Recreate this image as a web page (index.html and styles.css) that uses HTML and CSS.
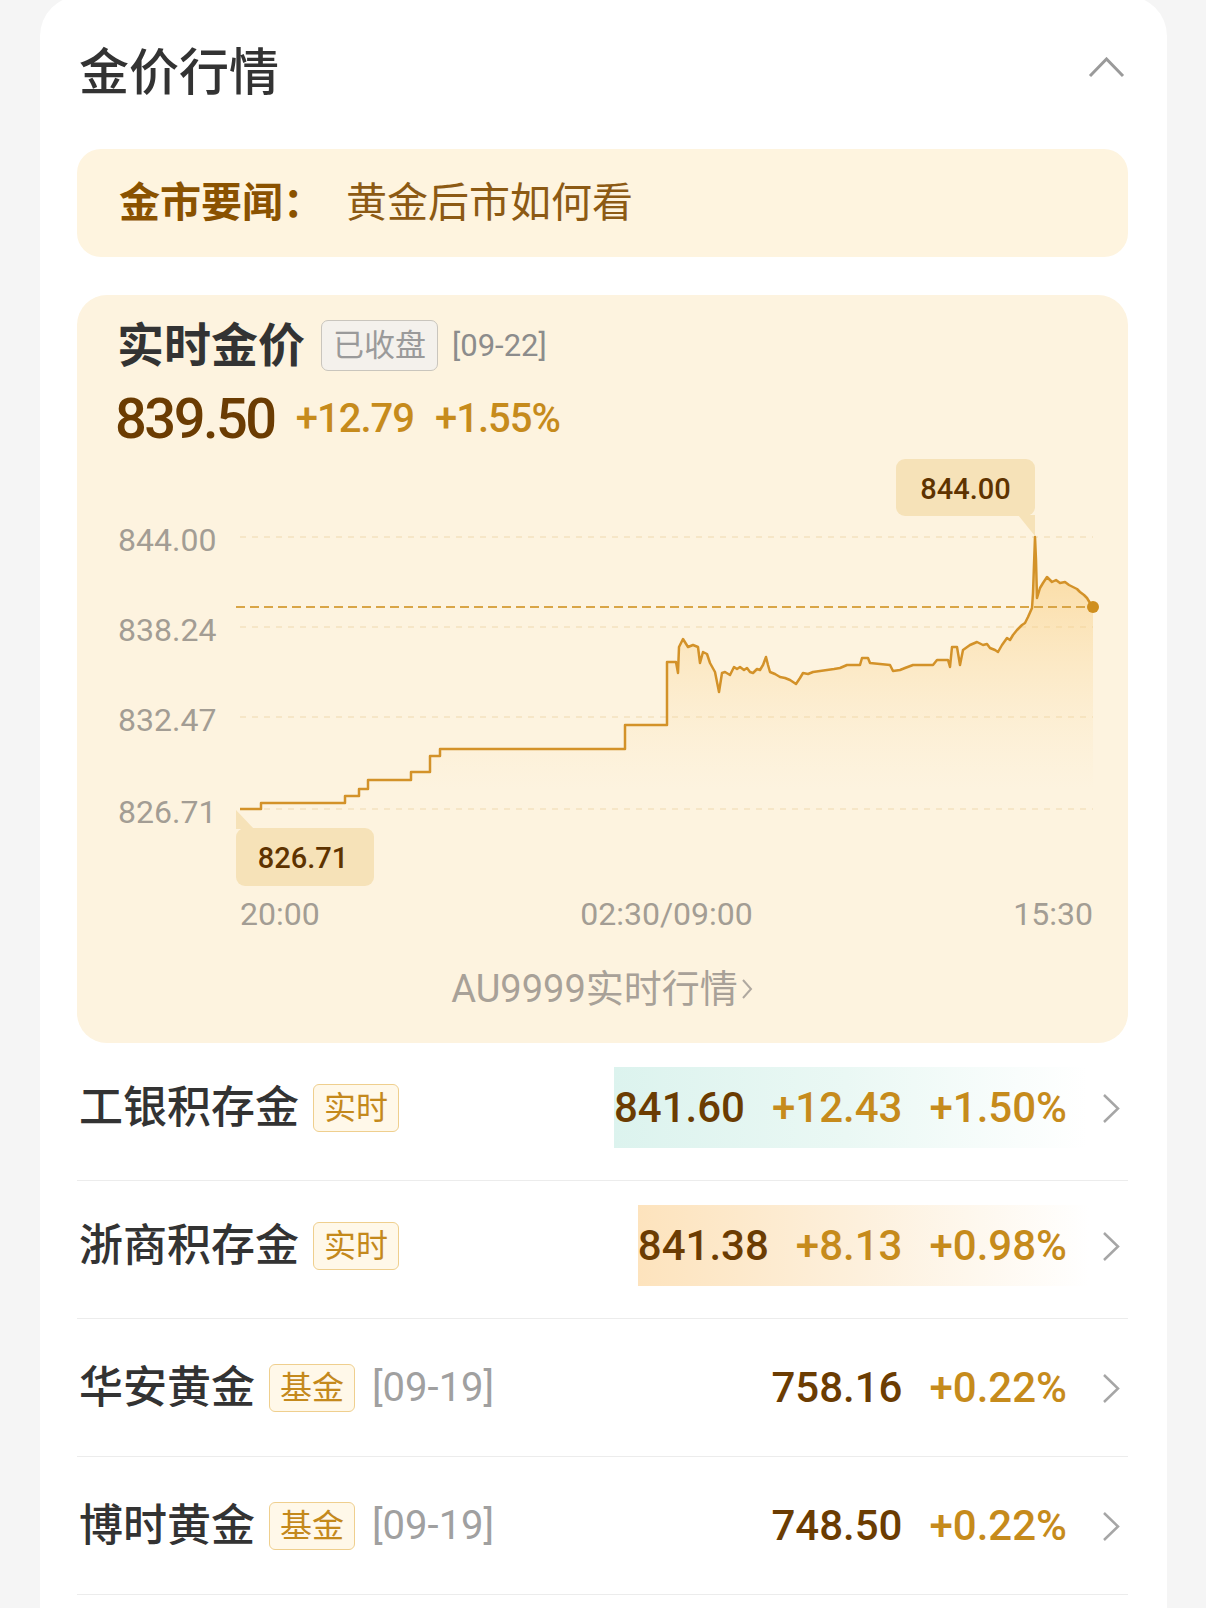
FILE: index.html
```html
<!DOCTYPE html>
<html lang="zh-CN">
<head>
<meta charset="utf-8">
<title>金价行情</title>
<link rel="stylesheet" href="styles.css">
</head>
<body>
<div class="card">
  <div class="head">
    <h1 class="title">金价行情</h1>
    <svg class="collapse" viewBox="0 0 37 22"><polyline points="2,19 18.5,2 35,19" /></svg>
  </div>

  <div class="news">
    <span class="news-label">金市要闻：</span><span class="news-text">黄金后市如何看</span>
  </div>

  <div class="live">
    <div class="live-head">
      <span class="live-title">实时金价</span>
      <span class="tag-closed">已收盘</span>
      <span class="live-date">[09-22]</span>
    </div>
    <div class="live-price">
      <span class="price">839.50</span>
      <span class="pchg">+12.79</span>
      <span class="pchg">+1.55%</span>
    </div>

    <svg class="chart" viewBox="77 457 1051 433" width="1051" height="433">
      <defs>
        <linearGradient id="areaGrad" gradientUnits="userSpaceOnUse" x1="0" y1="540" x2="0" y2="790">
          <stop offset="0" class="stop-a" />
          <stop offset="1" class="stop-b" />
        </linearGradient>
      </defs>
      <text class="ylab" x="118" y="551">844.00</text>
      <text class="ylab" x="118" y="641">838.24</text>
      <text class="ylab" x="118" y="731">832.47</text>
      <text class="ylab" x="118" y="823">826.71</text>
      <line class="grid" x1="240" y1="537" x2="1093" y2="537" />
      <line class="grid" x1="240" y1="627" x2="1093" y2="627" />
      <line class="grid" x1="240" y1="717" x2="1093" y2="717" />
      <line class="grid" x1="240" y1="809" x2="1093" y2="809" />
      <path class="area" d="M240 809 H261 V803 H345 V796 H359 V789 H368 V780 H411 V772 H430 V756 H440 V749 H625 V725 H667 V662 H676 L678 673 L679 647 L683 639 L688 647 L693 645 L698 647 L700 663 L703 652 L707 654 L710 663 L715 672 L719 692 L722 673 L725 672 L730 675 L734 667 L737 669 L740 667 L744 670 L747 668 L750 672 L753 673 L757 669 L760 670 L763 665 L766 657 L768 665 L770 672 L775 674 L780 677 L785 678 L790 680 L796 684 L800 678 L803 673 L808 674 L813 672 L820 671 L827 670 L834 669 L840 668 L847 665 L860 665 L862 658 L868 658 L870 663 L890 665 L893 671 L900 670 L905 668 L913 665 L933 665 L937 660 L948 660 L950 667 L952 647 L957 647 L960 665 L963 650 L970 645 L977 642 L983 645 L987 644 L990 648 L995 650 L998 652 L1002 645 L1007 638 L1010 640 L1013 635 L1017 630 L1022 625 L1025 623 L1028 617 L1032 608 L1033 593 L1035 537 L1036 560 L1037 598 L1040 588 L1043 583 L1047 577 L1050 580 L1052 582 L1056 580 L1060 583 L1065 582 L1069 585 L1073 587 L1077 589 L1080 592 L1084 595 L1087 598 L1090 603 L1093 607 V890 H240 Z" />
      <line class="ref" x1="236" y1="607" x2="1093" y2="607" />
      <path class="line" d="M240 809 H261 V803 H345 V796 H359 V789 H368 V780 H411 V772 H430 V756 H440 V749 H625 V725 H667 V662 H676 L678 673 L679 647 L683 639 L688 647 L693 645 L698 647 L700 663 L703 652 L707 654 L710 663 L715 672 L719 692 L722 673 L725 672 L730 675 L734 667 L737 669 L740 667 L744 670 L747 668 L750 672 L753 673 L757 669 L760 670 L763 665 L766 657 L768 665 L770 672 L775 674 L780 677 L785 678 L790 680 L796 684 L800 678 L803 673 L808 674 L813 672 L820 671 L827 670 L834 669 L840 668 L847 665 L860 665 L862 658 L868 658 L870 663 L890 665 L893 671 L900 670 L905 668 L913 665 L933 665 L937 660 L948 660 L950 667 L952 647 L957 647 L960 665 L963 650 L970 645 L977 642 L983 645 L987 644 L990 648 L995 650 L998 652 L1002 645 L1007 638 L1010 640 L1013 635 L1017 630 L1022 625 L1025 623 L1028 617 L1032 608 L1033 593 L1035 537 L1036 560 L1037 598 L1040 588 L1043 583 L1047 577 L1050 580 L1052 582 L1056 580 L1060 583 L1065 582 L1069 585 L1073 587 L1077 589 L1080 592 L1084 595 L1087 598 L1090 603 L1093 607" />
      <circle class="dot" cx="1093" cy="607" r="6" />
      <rect class="tip" x="896" y="459" width="139" height="57" rx="9" />
      <polygon class="tip-arrow" points="1018,515 1035,515 1035,536" />
      <text class="tip-text" x="965.5" y="499">844.00</text>
      <rect class="tip" x="236" y="828" width="138" height="58" rx="9" />
      <polygon class="tip-arrow" points="236,810 236,829 254,829" />
      <text class="tip-text" x="303" y="868">826.71</text>
    </svg>

    <div class="xaxis"><span>20:00</span><span>02:30/09:00</span><span>15:30</span></div>
    <div class="more">AU9999实时行情<svg class="more-chev" viewBox="0 0 14 22"><polyline points="3,2 11,11 3,20" /></svg></div>
  </div>

  <ul class="list">
    <li class="row row-hl">
      <span class="name">工银积存金</span><span class="badge">实时</span>
      <div class="quote quote-teal">
        <span class="val">841.60</span><span class="chg">+12.43</span><span class="chg">+1.50%</span>
        <svg class="chev" viewBox="0 0 20 32"><polyline points="3,3 17,16.5 3,30" /></svg>
      </div>
    </li>
    <li class="row row-hl">
      <span class="name">浙商积存金</span><span class="badge">实时</span>
      <div class="quote quote-orange">
        <span class="val">841.38</span><span class="chg">+8.13</span><span class="chg">+0.98%</span>
        <svg class="chev" viewBox="0 0 20 32"><polyline points="3,3 17,16.5 3,30" /></svg>
      </div>
    </li>
    <li class="row">
      <span class="name">华安黄金</span><span class="badge">基金</span><span class="date">[09-19]</span>
      <div class="quote">
        <span class="val">758.16</span><span class="chg">+0.22%</span>
        <svg class="chev" viewBox="0 0 20 32"><polyline points="3,3 17,16.5 3,30" /></svg>
      </div>
    </li>
    <li class="row">
      <span class="name">博时黄金</span><span class="badge">基金</span><span class="date">[09-19]</span>
      <div class="quote">
        <span class="val">748.50</span><span class="chg">+0.22%</span>
        <svg class="chev" viewBox="0 0 20 32"><polyline points="3,3 17,16.5 3,30" /></svg>
      </div>
    </li>
  </ul>
</div>
</body>
</html>
```

FILE: styles.css
```css
* { box-sizing: border-box; }
html, body { margin: 0; padding: 0; }
body {
  width: 1206px;
  height: 1608px;
  overflow: hidden;
  background: #f5f5f5;
  font-family: Roboto, "Noto Sans CJK SC", sans-serif;
  line-height: 1;
}

.card {
  width: 1127px;
  margin: -4px 0 0 40px;
  padding: 0 39px 0 37px;
  background: #fff;
  border-radius: 40px 40px 0 0;
  min-height: 1700px;
}

.head {
  height: 153px;
  display: flex;
  align-items: center;
  justify-content: space-between;
}
.title {
  margin: 0;
  padding-left: 2px;
  font-size: 50px;
  font-weight: 500;
  color: #333;
  line-height: 1;
}
.collapse {
  width: 37px;
  height: 22px;
  margin: 0 3px 9px 0;
}
.collapse polyline {
  fill: none;
  stroke: #9a9a9a;
  stroke-width: 3;
}

.news {
  height: 108px;
  border-radius: 24px;
  background: #fef4df;
  display: flex;
  align-items: center;
  padding-left: 42px;
  font-size: 41px;
}
.news-label { font-weight: 700; color: #8a5200; }
.news-text { margin-left: 22px; color: #8c5a14; }

.live {
  margin-top: 38px;
  height: 748px;
  padding-top: 20px;
  background: #fdf3df;
  border-radius: 30px;
}
.live-head {
  height: 60px;
  padding-left: 40px;
  display: flex;
  align-items: center;
}
.live-title {
  font-size: 47px;
  font-weight: 700;
  color: #333;
}
.tag-closed {
  margin-left: 16px;
  width: 117px;
  height: 51px;
  display: flex;
  align-items: center;
  justify-content: center;
  border: 1.5px solid #c9c5bd;
  border-radius: 7px;
  background: #f4f1ec;
  font-size: 31px;
  color: #9a9a9a;
}
.live-date {
  margin-left: 14px;
  font-size: 31px;
  color: #8c8c8c;
}
.live-price {
  margin-top: 14px;
  height: 60px;
  padding-left: 38px;
  display: flex;
  align-items: center;
}
.price {
  font-size: 56px;
  font-weight: 500;
  letter-spacing: -2.5px;
  color: #6b3c02;
}
.pchg {
  margin-left: 21px;
  font-size: 40px;
  font-weight: 500;
  letter-spacing: -1px;
  color: #c68b1c;
}

.chart { display: block; width: 1051px; height: 433px; margin-top: 8px; }
.ylab {
  font-family: Roboto, sans-serif;
  font-size: 32px;
  fill: #a39d94;
}
.grid {
  stroke: #f3e2c0;
  stroke-width: 1.5;
  stroke-dasharray: 6 6;
}
.ref {
  stroke: #d9a546;
  stroke-width: 2;
  stroke-dasharray: 9 5;
}
.area { fill: url(#areaGrad); }
.stop-a { stop-color: #f8c56a; stop-opacity: 0.6; }
.stop-b { stop-color: #fbe0ad; stop-opacity: 0; }
.line {
  fill: none;
  stroke: #d39229;
  stroke-width: 2.5;
  stroke-linejoin: round;
}
.dot { fill: #cf8f1f; }
.tip { fill: #f6e2b8; }
.tip-arrow { fill: #f6e2b8; }
.tip-text {
  font-family: Roboto, sans-serif;
  font-size: 29px;
  font-weight: 500;
  fill: #5e3300;
  text-anchor: middle;
}

.xaxis {
  margin-top: 4px;
  height: 40px;
  padding: 0 35px 0 163px;
  display: flex;
  align-items: center;
  justify-content: space-between;
  font-size: 32px;
  color: #a39d94;
}
.more {
  margin-top: 33px;
  height: 44px;
  display: flex;
  align-items: center;
  justify-content: center;
  font-size: 38px;
  color: #a8a198;
}
.more-chev { width: 14px; height: 22px; margin-left: 2px; }
.more-chev polyline { fill: none; stroke: #b0a9a0; stroke-width: 2; }

.list { list-style: none; margin: 0; padding: 0; }
.row {
  height: 138px;
  border-bottom: 1px solid #ececec;
  display: flex;
  align-items: center;
}
.row-hl { padding-bottom: 8px; }
.name {
  padding-left: 2px;
  font-size: 44px;
  font-weight: 500;
  color: #333;
}
.badge {
  margin-left: 14px;
  height: 48px;
  padding: 0 10px;
  display: flex;
  align-items: center;
  border: 1px solid #efcf8e;
  border-radius: 6px;
  background: #fff8e9;
  font-size: 32px;
  color: #c4891c;
}
.date {
  margin-left: 17px;
  font-size: 40px;
  color: #a0a0a0;
}
.quote {
  margin-left: auto;
  height: 81px;
  padding-right: 7px;
  display: flex;
  align-items: center;
  gap: 27px;
}
.quote-teal { background: linear-gradient(90deg, #dcf3ee 0%, #eaf8f4 45%, #ffffff 92%); }
.quote-orange { background: linear-gradient(90deg, #fde3bd 0%, #fdf0dc 45%, #ffffff 92%); }
.val {
  font-size: 42px;
  font-weight: 500;
  color: #6b3c02;
}
.chg {
  font-size: 42px;
  font-weight: 500;
  color: #c68b1c;
}
.chev { width: 20px; height: 32px; margin-left: 7px; }
.chev polyline { fill: none; stroke: #a6a6a6; stroke-width: 2.5; }
```
